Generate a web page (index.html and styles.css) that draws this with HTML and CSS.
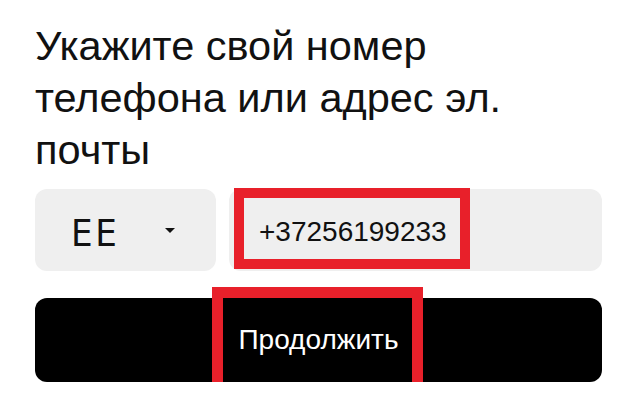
FILE: index.html
```html
<!DOCTYPE html>
<html lang="ru">
<head>
<meta charset="utf-8">
<link rel="stylesheet" href="styles.css">
</head>
<body>
<main class="page">
  <h1 class="title">Укажите свой номер телефона или адрес эл. почты</h1>
  <div class="row">
    <div class="select">
      <span class="code">EE</span>
      <svg class="caret" width="10" height="5" viewBox="0 0 10 5"><path d="M0 0H10L5 5Z" fill="#111"/></svg>
    </div>
    <div class="field">
      <span class="phone">+37256199233</span>
      <div class="mark mark-phone"></div>
    </div>
  </div>
  <div class="button">
    <span class="button-text">Продолжить</span>
    <div class="mark mark-button"></div>
  </div>
</main>
</body>
</html>
```
FILE: styles.css
```css
html, body {
  margin: 0;
  padding: 0;
  background: #fff;
}
.page {
  padding: 20px 22px 0 35px;
  font-family: "Liberation Sans", Arial, sans-serif;
  color: #111;
}
.title {
  margin: 0;
  font-weight: normal;
  font-size: 41.5px;
  line-height: 52px;
}
.row {
  display: flex;
  gap: 13px;
  margin-top: 13px;
  height: 82px;
}
.select {
  width: 181px;
  flex: none;
  background: #efefef;
  border-radius: 12px;
  display: flex;
  align-items: center;
  padding-left: 36px;
  box-sizing: border-box;
}
.code {
  font-family: "DejaVu Sans", sans-serif;
  font-size: 38px;
  letter-spacing: 3px;
  color: #111;
  width: 94px;
  margin-top: 5px;
  display: inline-block;
  transform: scaleX(0.9);
  transform-origin: left center;
}
.caret {
  display: block;
  margin-top: 1px;
}
.field {
  flex: 1;
  position: relative;
  background: #efefef;
  border-radius: 12px;
  display: flex;
  align-items: center;
  padding-left: 30px;
}
.phone {
  font-size: 28px;
  color: #111;
  margin-top: 3px;
}
.mark {
  position: absolute;
  border: 10px solid #e8202a;
  box-sizing: border-box;
}
.mark-phone {
  left: 5px;
  top: -1px;
  width: 236px;
  height: 81px;
}
.button {
  position: relative;
  margin-top: 27px;
  height: 84px;
  background: #000;
  border-radius: 12px;
  display: flex;
  align-items: center;
  justify-content: center;
}
.button-text {
  color: #fff;
  font-size: 28px;
}
.mark-button {
  left: 177px;
  top: -11px;
  width: 211px;
  height: 106px;
  border-width: 11px;
}
```
